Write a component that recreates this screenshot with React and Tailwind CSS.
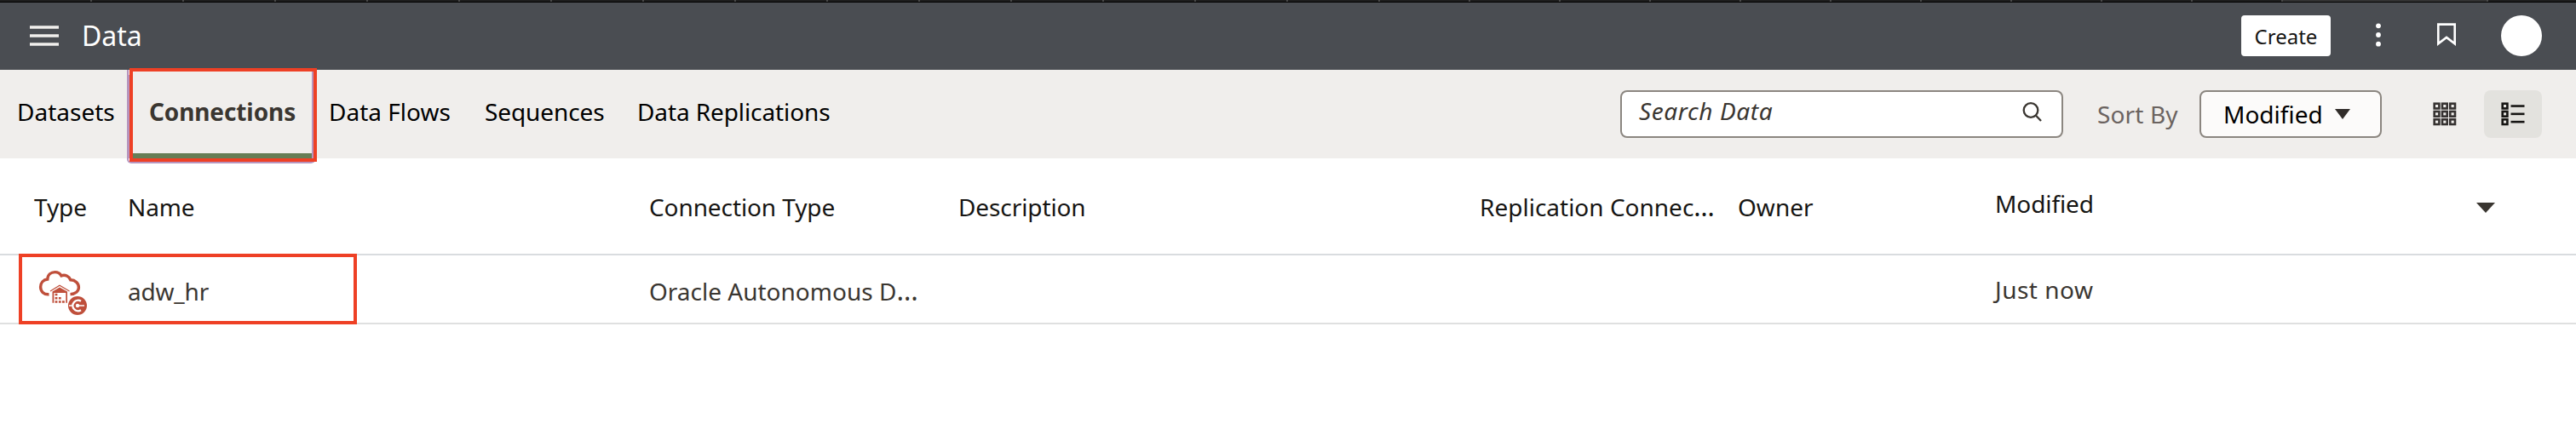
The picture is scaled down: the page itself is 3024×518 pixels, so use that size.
const WIDE_TABS = "bg-[repeating-linear-gradient(90deg,#1e1e1e_0px,#1e1e1e_106px,#4a4a4a_106px,#4a4a4a_108px)]";
const NARROW_TABS = "bg-[repeating-linear-gradient(90deg,#1e1e1e_0px,#1e1e1e_104px,#4a4a4a_104px,#4a4a4a_106px)]";

function TypeIcon() {
  return (
    <svg width="58" height="56" viewBox="0 0 58 56" fill="none">
      <path d="M12.500 29.700C6 30.200 2.600 26 2.600 21C2.600 16 6 12.600 10.800 12C11 6.500 15 3.600 19.500 3.600C23 3.600 25.500 5.200 27 7.800C31.500 6 36 8.500 37.800 12.800C43.500 13 47.400 16.800 47.400 21.500C47.400 26 43.500 29.200 37.500 29.600" stroke="#bf4f3b" strokeWidth="3.400" />
      <path d="M14 26L25 19.300L36.500 26" stroke="#bf4f3b" strokeWidth="1.200" />
      <path d="M16.500 26.600L25 21.500L34 26.600V39.700H32.300V28H18.300V39.700H16.500Z" fill="#bf4f3b" />
      <path d="M19.600 28.700h2.800v2.600h-2.800zM19.600 33h2.800v2.600h-2.800zM23.900 33h2.800v2.600h-2.800zM19.600 37.200h2.800v2.600h-2.800zM23.900 37.200h2.800v2.600h-2.800zM28 37.200h2.800v2.600h-2.800z" fill="#bf4f3b" />
      <circle cx="46" cy="43" r="11" fill="#bf4f3b" />
      <path d="M50 37.800A6.200 6.200 0 1 0 50 48.200" stroke="#fff" strokeWidth="2.400" />
      <path d="M36 43h4M46 43h8" stroke="#fff" strokeWidth="1.500" />
      <circle cx="46" cy="43" r="2.200" fill="#fff" />
    </svg>
  );
}

function GridIcon() {
  return (
    <svg width="28" height="28" viewBox="0 0 28 28" fill="none" stroke="#363231" strokeWidth="2.600">
      {[1.700, 11, 20.300].map((y) =>
        [1.700, 11, 20.300].map((x) => <rect key={x + "-" + y} x={x} y={y} width="5.700" height="5.700" />)
      )}
    </svg>
  );
}

function ListIcon() {
  return (
    <svg width="28" height="28" viewBox="0 0 28 28" fill="none" stroke="#161513" strokeWidth="2.600">
      {[1.700, 11, 20.300].map((y) => (
        <g key={y}>
          <rect x="1.700" y={y} width="5.700" height="5.700" />
          <path d={`M11.500 ${y + 2.850}H27.500`} />
        </g>
      ))}
    </svg>
  );
}

const tab = "flex h-full items-center whitespace-nowrap pb-[6px]";

export default function App() {
  return (
    <div className="relative h-[518px] w-[3024px] overflow-hidden bg-white font-['Noto_Sans',sans-serif] text-[28px] leading-[38px] text-[#161513]">
      <div className="flex h-[2px] bg-[#1e1e1e]">
        <div className={`w-[1620px] ${WIDE_TABS}`} />
        <div className={`w-[1060px] ${NARROW_TABS}`} />
        <div className="w-[241px] border-r-2 border-[#4a4a4a] bg-[#333333]" />
      </div>
      <div className="h-px bg-black" />
      <header className="flex h-[79px] items-center bg-[#4a4d52] pb-px pl-[35px] text-white">
        <svg width="34" height="24" viewBox="0 0 34 24" stroke="#f1efed" strokeWidth="3.600">
          <path d="M0 2H34M0 12H34M0 22H34" />
        </svg>
        <h1 className="ml-[26px] pl-px text-[32px] leading-[44px]">Data</h1>
        <div className="ml-auto flex items-center pr-10">
          <button className="h-12 w-[105px] rounded-[4px] bg-white pt-[2px] text-2xl text-[#161513]">Create</button>
          <svg className="mb-[2px] ml-[53px]" width="6" height="28" viewBox="0 0 6 28" fill="#fff">
            <circle cx="3" cy="3.300" r="2.900" />
            <circle cx="3" cy="14" r="2.900" />
            <circle cx="3" cy="24.700" r="2.900" />
          </svg>
          <svg className="mb-[2px] ml-[66px]" width="22" height="28" viewBox="0 0 22 28" fill="none" stroke="#fff" strokeWidth="2.600">
            <path d="M1.300 1.600H20.700V24.300L11 17L1.300 24.300Z" />
          </svg>
          <div className="ml-[53px] h-12 w-12 rounded-full bg-white" />
        </div>
      </header>
      <nav className="flex h-[104px] items-center bg-[#f0eeec] pl-5 text-black">
        <div className={`${tab} w-[136px]`}>Datasets</div>
        <div className="flex h-full w-[210px] items-center justify-center border-b-[6px] border-[#667d55] font-bold tracking-[-0.1px] whitespace-nowrap text-[#3a3631]">Connections</div>
        <div className={`${tab} ml-[20px] w-[183px]`}>Data Flows</div>
        <div className={`${tab} w-[179px] tracking-[-0.1px]`}>Sequences</div>
        <div className={`${tab} tracking-[-0.1px]`}>Data Replications</div>
        <div className="ml-auto flex items-center pr-10">
          <div className="flex h-14 w-[520px] items-center justify-between rounded-lg border-2 border-[#8b8680] bg-white pr-[22px] pb-[5px] pl-[20px] text-[#3a3631] italic">
            <span className="mb-[3px] tracking-[0.6px]">Search Data</span>
            <svg width="24" height="25" viewBox="0 0 24 25" fill="none" stroke="#3a3631" strokeWidth="2.300">
              <circle cx="10" cy="10.500" r="8.300" />
              <path d="M15.800 16.500L22 23" />
            </svg>
          </div>
          <span className="ml-[40px] w-[120px] whitespace-nowrap tracking-[0.15px] text-[#6b6360]">Sort By</span>
          <div className="flex h-14 w-[214px] items-center rounded-lg border-2 border-[#8b8680] bg-[#fcfbfa] pl-[26px]">
            <span className="w-[131px]">Modified</span>
            <svg width="18" height="12" viewBox="0 0 18 12" fill="#312d2a"><path d="M0 0H18L9 12Z" /></svg>
          </div>
          <div className="ml-[40px] flex h-14 w-[68px] items-center justify-center"><GridIcon /></div>
          <div className="ml-[12px] flex h-14 w-[68px] items-center justify-center rounded-lg bg-[#e3e2de]"><ListIcon /></div>
        </div>
      </nav>
      <div className="flex h-[114px] items-center border-b-2 border-[#d9dcdf] pt-px pl-10 tracking-[-0.1px] whitespace-nowrap">
        <div className="w-[110px]">Type</div>
        <div className="w-[612px]">Name</div>
        <div className="w-[363px]">Connection Type</div>
        <div className="w-[612px]">Description</div>
        <div className="w-[303px] tracking-normal">Replication Connec<span className="text-[31px] leading-none">…</span></div>
        <div className="w-[302px] tracking-normal">Owner</div>
        <div className="w-[565px] pb-2">Modified</div>
        <svg className="mt-[3px]" width="22" height="12" viewBox="0 0 22 12" fill="#3a3631"><path d="M0 0H22L11 12Z" /></svg>
      </div>
      <div className="flex h-[81px] items-center border-b-2 border-[#dfe0e0] pl-10 whitespace-nowrap text-[#3a3631]">
        <div className="w-[110px] pt-[9px] pl-[5px]"><TypeIcon /></div>
        <div className="w-[612px] pt-[5px] tracking-[-0.2px]">adw_hr</div>
        <div className="w-[1580px] pt-[5px]">Oracle Autonomous D<span className="text-[32px] leading-none">…</span></div>
        <div className="pt-[1px] tracking-[0.5px]">Just now</div>
      </div>
      <div className="absolute top-[82px] left-[149px] h-[110px] w-[221px] rounded-b-[5px] border-2 border-t-0 border-[#b795be]" />
      <div className="absolute top-[84px] left-[366px] h-[102px] w-[2px] bg-[#b795be]" />
      <div className="absolute top-[80px] left-[152px] h-[110px] w-[220px] border-4 border-[#ee4025]" />
      <div className="absolute top-[88px] left-[151px] h-[98px] w-px bg-[#b795be]" />
      <div className="absolute top-[298px] left-[22px] h-[83px] w-[397px] border-4 border-[#ee4025]" />
    </div>
  );
}
